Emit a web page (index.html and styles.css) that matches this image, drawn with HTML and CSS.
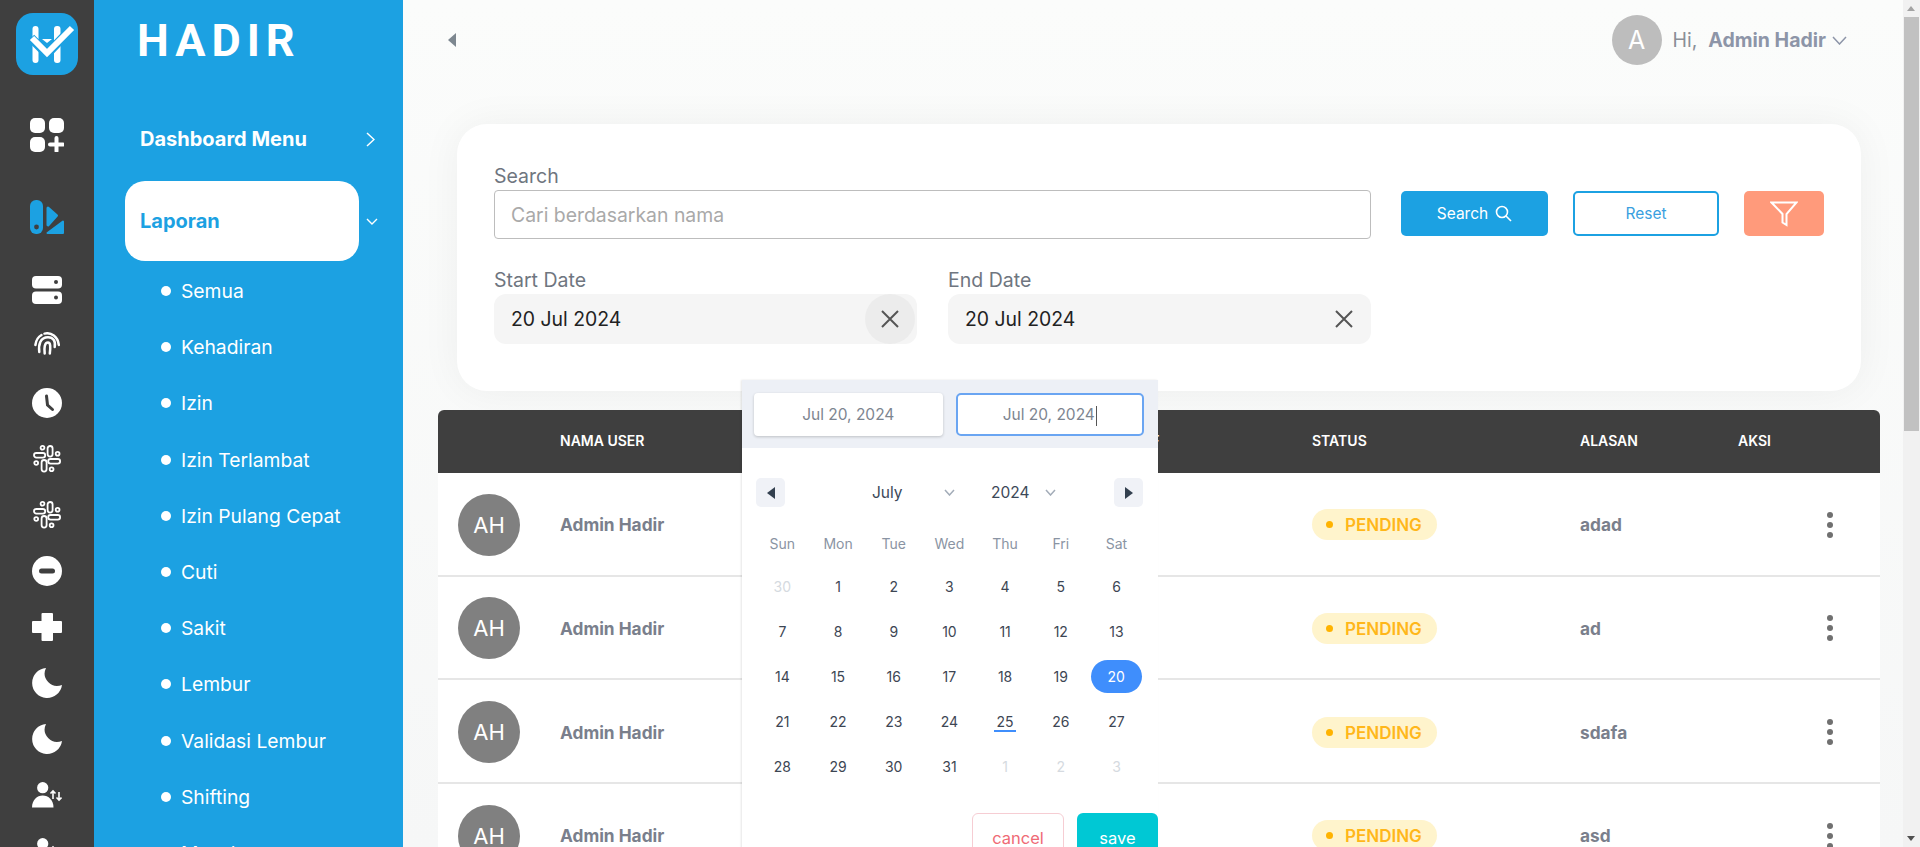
FILE: index.html
```html
<!DOCTYPE html>
<html lang="en">
<head>
    <meta charset="UTF-8">
    <meta name="viewport" content="width=device-width, initial-scale=1.0">
    <title>Hadir - Laporan</title>
    <link rel="stylesheet" href="styles.css">
</head>
<body>
    <nav class="rail">
        <div class="rail-logo">
            <svg width="62" height="62" viewBox="0 0 62 62">
                <rect x="16.5" y="13" width="6" height="37" rx="3" fill="#fff"/>
                <rect x="38" y="13" width="6.5" height="37" rx="3" fill="#fff"/>
                <path d="M15 25 L31 41 L56 15" fill="none" stroke="#1ca1e2" stroke-width="9"/>
                <path d="M16 25 L31 40 L56 15" fill="none" stroke="#fff" stroke-width="6"/>
                <path d="M26 26 H36 L31 30 Z" fill="#fff"/>
            </svg>
        </div>
        <div class="rail-item rail-grid">
            <svg width="34" height="34" viewBox="0 0 34 34" fill="#fff">
                <rect width="15" height="15" rx="5"/><rect x="19" width="15" height="15" rx="5"/><rect y="19" width="15" height="15" rx="5"/>
                <path d="M20 26.5 H33 M26.5 20 V33" stroke="#fff" stroke-width="4" stroke-linecap="round"/>
            </svg>
        </div>
        <div class="rail-item rail-report">
            <svg width="34" height="34" viewBox="0 0 34 34" fill="#1ca1e2">
                <rect width="13" height="34" rx="6"/><circle cx="6.5" cy="27" r="2.4" fill="#3f3f3f"/>
                <path d="M18 8 L26.5 15.5 L18 25 Z" stroke="#1ca1e2" stroke-width="3" stroke-linejoin="round"/>
                <path d="M17.5 33 L33 21.5 V33 Z" stroke="#1ca1e2" stroke-width="2" stroke-linejoin="round"/>
            </svg>
        </div>
        <div class="rail-item rail-server">
            <svg width="30" height="28" viewBox="0 0 30 28" fill="#fff">
                <rect width="30" height="12.5" rx="4"/><rect y="15.5" width="30" height="12.5" rx="4"/>
                <circle cx="24" cy="6" r="2" fill="#3f3f3f"/><circle cx="24" cy="21.5" r="2" fill="#3f3f3f"/>
            </svg>
        </div>
        <div class="rail-item rail-finger">
            <svg width="26" height="24" viewBox="0 0 26 24" fill="none" stroke="#fff" stroke-width="2.5" stroke-linecap="round">
                <path d="M1.4 13 C2 8 4 5 7.5 3"/>
                <path d="M10.5 1.6 C17 0 24 4.5 24.8 13"/>
                <path d="M5.3 20 C4.4 13 6 5.2 14 5.2 C19.5 5.2 21.8 9.5 20.7 15"/>
                <path d="M10.7 21.5 C10 16 10.5 10.5 14 10.5 C16.6 10.5 16.6 15 15.8 21.5"/>
            </svg>
        </div>
        <div class="rail-item rail-clock">
            <svg width="30" height="30" viewBox="0 0 30 30">
                <circle cx="15" cy="15" r="15" fill="#fff"/>
                <path d="M14.5 8 L15.5 17 L20.5 21.5" fill="none" stroke="#3f3f3f" stroke-width="3" stroke-linecap="round"/>
            </svg>
        </div>
        <div class="rail-item">
            <svg width="28" height="28" viewBox="0 0 28 28"><use href="#slack-icon"/></svg>
        </div>
        <div class="rail-item">
            <svg width="28" height="28" viewBox="0 0 28 28"><use href="#slack-icon"/></svg>
        </div>
        <div class="rail-item">
            <svg width="30" height="30" viewBox="0 0 30 30">
                <circle cx="15" cy="15" r="15" fill="#fff"/><rect x="7" y="12.5" width="16" height="5" rx="2.5" fill="#3f3f3f"/>
            </svg>
        </div>
        <div class="rail-item">
            <svg width="30" height="28" viewBox="0 0 30 28"><path d="M9.5 1 Q9.5 0 10.5 0 H20 Q21 0 21 1 V8 H29 Q30 8 30 9 V19 Q30 20 29 20 H21 V27 Q21 28 20 28 H10.5 Q9.5 28 9.5 27 V20 H1 Q0 20 0 19 V9 Q0 8 1 8 H9.5 Z" fill="#fff"/></svg>
        </div>
        <div class="rail-item">
            <svg width="30" height="30" viewBox="0 0 30 30"><path d="M14 0 A15 15 0 1 0 30 17 A12.5 12.5 0 0 1 14 0 Z" fill="#fff"/></svg>
        </div>
        <div class="rail-item">
            <svg width="30" height="30" viewBox="0 0 30 30"><path d="M14 0 A15 15 0 1 0 30 17 A12.5 12.5 0 0 1 14 0 Z" fill="#fff"/></svg>
        </div>
        <div class="rail-item">
            <svg width="30" height="26" viewBox="0 0 30 26"><use href="#user-icon"/></svg>
        </div>
        <div class="rail-item">
            <svg width="30" height="26" viewBox="0 0 30 26"><use href="#user-icon"/></svg>
        </div>
        <svg class="icon-defs" width="0" height="0">
            <symbol id="slack-icon" viewBox="0 0 28 28">
                <g fill="none" stroke="#fff" stroke-width="1.8">
                    <circle cx="9.5" cy="2.8" r="1.9"/><rect x="14.6" y="1" width="5" height="10.6" rx="2.5"/>
                    <circle cx="24.6" cy="8.8" r="1.9"/><rect x="15.2" y="14" width="11.9" height="4.6" rx="2.3"/>
                    <circle cx="18.6" cy="24.2" r="1.9"/><rect x="8.6" y="15" width="5" height="11.6" rx="2.5"/>
                    <circle cx="3.2" cy="18" r="1.9"/><rect x="1" y="8" width="11.2" height="4.6" rx="2.3"/>
                </g>
            </symbol>
            <symbol id="user-icon" viewBox="0 0 30 26">
                <circle cx="10.7" cy="5.7" r="5.6" fill="#fff"/>
                <path d="M0 25.5 C0 18 5 13.5 10.7 13.5 C16.5 13.5 21.5 18 21.5 25.5 Z" fill="#fff"/>
                <path d="M21 17 V9 M18.5 11.5 L21 9 L23.5 11.5 M27 10 V18 M24.5 15.5 L27 18 L29.5 15.5" fill="none" stroke="#fff" stroke-width="1.6"/>
            </symbol>
        </svg>
    </nav>

    <aside class="sidebar">
        <div class="brand">HADIR</div>
        <div class="menu-head">
            <span>Dashboard Menu</span>
            <svg width="9" height="15" viewBox="0 0 9 15" fill="none" stroke="#fff" stroke-width="1.5"><path d="M1 1 L8 7.5 L1 14"/></svg>
        </div>
        <div class="menu-open">
            <div class="menu-pill">Laporan</div>
            <svg width="12" height="7" viewBox="0 0 12 7" fill="none" stroke="#fff" stroke-width="1.4"><path d="M1 1 L6 6 L11 1"/></svg>
        </div>
        <ul class="submenu">
            <li>Semua</li>
            <li>Kehadiran</li>
            <li>Izin</li>
            <li>Izin Terlambat</li>
            <li>Izin Pulang Cepat</li>
            <li>Cuti</li>
            <li>Sakit</li>
            <li>Lembur</li>
            <li>Validasi Lembur</li>
            <li>Shifting</li>
            <li>Masuk</li>
        </ul>
    </aside>

    <main class="main">
        <header class="topbar">
            <svg class="collapse" width="8" height="14" viewBox="0 0 8 14"><path d="M8 0 V14 L0 7 Z" fill="#7d8790"/></svg>
            <div class="user">
                <div class="user-avatar">A</div>
                <span class="user-hi">Hi,</span>
                <span class="user-name">Admin Hadir</span>
                <svg width="15" height="9" viewBox="0 0 15 9" fill="none" stroke="#8d95a8" stroke-width="1.5"><path d="M1 1 L7.5 8 L14 1"/></svg>
            </div>
        </header>

        <section class="filter-card">
            <div class="search-row">
                <div class="field">
                    <label>Search</label>
                    <div class="text-input">Cari berdasarkan nama</div>
                </div>
                <div class="actions">
                    <button class="btn btn-search">Search
                        <svg width="17" height="17" viewBox="0 0 17 17" fill="none" stroke="#fff" stroke-width="1.6"><circle cx="7" cy="7" r="5.5"/><path d="M11 11 L16 16"/></svg>
                    </button>
                    <button class="btn btn-reset">Reset</button>
                    <button class="btn btn-filter">
                        <svg width="28" height="26" viewBox="0 0 28 26" fill="none" stroke="#fff" stroke-width="2"><path d="M1.5 1.5 H26.5 L16.5 13 V24 L12.5 21.5 V13 Z"/></svg>
                    </button>
                </div>
            </div>
            <div class="date-row">
                <div class="field">
                    <label>Start Date</label>
                    <div class="date-input">
                        20 Jul 2024
                        <span class="clear clear-hover">
                            <svg width="18" height="18" viewBox="0 0 18 18" stroke="#555" stroke-width="2"><path d="M1 1 L17 17 M17 1 L1 17"/></svg>
                        </span>
                    </div>
                </div>
                <div class="field">
                    <label>End Date</label>
                    <div class="date-input">
                        20 Jul 2024
                        <span class="clear">
                            <svg width="18" height="18" viewBox="0 0 18 18" stroke="#555" stroke-width="2"><path d="M1 1 L17 17 M17 1 L1 17"/></svg>
                        </span>
                    </div>
                </div>
            </div>
        </section>

        <section class="report-table">
            <div class="table-head">
                <div></div>
                <div>NAMA USER</div>
                <div>TARIF</div>
                <div>STATUS</div>
                <div>ALASAN</div>
                <div>AKSI</div>
            </div>
            <div class="table-row">
                <div class="row-avatar">AH</div>
                <div class="cell-strong">Admin Hadir</div>
                <div></div>
                <div><span class="badge">PENDING</span></div>
                <div class="cell-strong">adad</div>
                <div class="kebab"><i></i><i></i><i></i></div>
            </div>
            <div class="table-row">
                <div class="row-avatar">AH</div>
                <div class="cell-strong">Admin Hadir</div>
                <div></div>
                <div><span class="badge">PENDING</span></div>
                <div class="cell-strong">ad</div>
                <div class="kebab"><i></i><i></i><i></i></div>
            </div>
            <div class="table-row">
                <div class="row-avatar">AH</div>
                <div class="cell-strong">Admin Hadir</div>
                <div></div>
                <div><span class="badge">PENDING</span></div>
                <div class="cell-strong">sdafa</div>
                <div class="kebab"><i></i><i></i><i></i></div>
            </div>
            <div class="table-row">
                <div class="row-avatar">AH</div>
                <div class="cell-strong">Admin Hadir</div>
                <div></div>
                <div><span class="badge">PENDING</span></div>
                <div class="cell-strong">asd</div>
                <div class="kebab"><i></i><i></i><i></i></div>
            </div>
        </section>

        <div class="datepicker">
            <div class="dp-inputs">
                <div class="dp-input">Jul 20, 2024</div>
                <div class="dp-input dp-focus">Jul 20, 2024<span class="caret"></span></div>
            </div>
            <div class="dp-nav">
                <span class="dp-arrow"><svg width="8" height="12" viewBox="0 0 8 12"><path d="M8 0 V12 L0 6 Z" fill="#33404f"/></svg></span>
                <span class="dp-month">July</span>
                <svg class="dp-chev" width="11" height="7" viewBox="0 0 11 7" fill="none" stroke="#a3acb8" stroke-width="1.5"><path d="M1 1 L5.5 6 L10 1"/></svg>
                <span class="dp-year">2024</span>
                <svg class="dp-chev" width="11" height="7" viewBox="0 0 11 7" fill="none" stroke="#a3acb8" stroke-width="1.5"><path d="M1 1 L5.5 6 L10 1"/></svg>
                <span class="dp-arrow dp-next"><svg width="8" height="12" viewBox="0 0 8 12"><path d="M0 0 V12 L8 6 Z" fill="#33404f"/></svg></span>
            </div>
            <div class="dp-grid dp-week">
                <span>Sun</span><span>Mon</span><span>Tue</span><span>Wed</span><span>Thu</span><span>Fri</span><span>Sat</span>
            </div>
            <div class="dp-grid dp-days">
                <span class="off">30</span><span>1</span><span>2</span><span>3</span><span>4</span><span>5</span><span>6</span>
                <span>7</span><span>8</span><span>9</span><span>10</span><span>11</span><span>12</span><span>13</span>
                <span>14</span><span>15</span><span>16</span><span>17</span><span>18</span><span>19</span><span class="selected">20</span>
                <span>21</span><span>22</span><span>23</span><span>24</span><span class="today">25</span><span>26</span><span>27</span>
                <span>28</span><span>29</span><span>30</span><span>31</span><span class="off">1</span><span class="off">2</span><span class="off">3</span>
            </div>
            <div class="dp-footer">
                <button class="dp-cancel">cancel</button>
                <button class="dp-save">save</button>
            </div>
        </div>
    </main>

    <div class="scrollbar">
        <span class="scroll-up"></span>
        <div class="scroll-thumb"></div>
        <span class="scroll-down"></span>
    </div>
</body>
</html>
```

FILE: styles.css
```css
* {
    box-sizing: border-box;
}

html, body {
    margin: 0;
    height: 100%;
    overflow: hidden;
}

body {
    display: flex;
    font-family: Inter, "Open Sans", sans-serif;
    background-color: #f8f9f9;
    color: #333;
}

/* left icon rail */
.rail {
    width: 94px;
    flex: none;
    height: 100vh;
    overflow: hidden;
    background-color: #3f3f3f;
    padding-top: 13px;
    display: flex;
    flex-direction: column;
    align-items: center;
}

.rail-logo {
    width: 62px;
    height: 62px;
    flex: none;
    background-color: #1ca1e2;
    border-radius: 17px;
}

.rail-logo svg {
    display: block;
}

.rail-item {
    height: 56px;
    flex: none;
    display: flex;
    align-items: center;
    justify-content: center;
}

.rail-grid { margin-top: 32px; }
.rail-report { margin-top: 26px; }
.rail-server { margin-top: 17px; }
.rail-finger { margin-top: -2px; }
.rail-clock { margin-top: 3px; }

.icon-defs {
    position: absolute;
}

/* blue menu */
.sidebar {
    width: 309px;
    flex: none;
    height: 100vh;
    overflow: hidden;
    background-color: #1ca1e2;
    color: #fff;
}

.brand {
    font-family: Roboto, sans-serif;
    font-weight: 700;
    font-size: 45px;
    line-height: 54px;
    letter-spacing: 6px;
    padding: 14px 0 0 43px;
}

.menu-head {
    display: flex;
    align-items: center;
    justify-content: space-between;
    margin-top: 37px;
    height: 68px;
    padding: 0 28px 0 46px;
    font-size: 20px;
    font-weight: 700;
}

.menu-open {
    display: flex;
    align-items: center;
    gap: 7px;
    margin: 8px 0 0 31px;
}

.menu-pill {
    width: 234px;
    height: 80px;
    display: flex;
    align-items: center;
    padding-left: 15px;
    background-color: #fff;
    border-radius: 20px;
    color: #1ca1e2;
    font-size: 20px;
    font-weight: 700;
}

.submenu {
    list-style: none;
    margin: 2px 0 0;
    padding: 0 0 0 87px;
}

.submenu li {
    position: relative;
    height: 56.2px;
    line-height: 56px;
    font-size: 19.3px;
    white-space: nowrap;
}

.submenu li::before {
    content: "";
    position: absolute;
    left: -20px;
    top: 23px;
    width: 10px;
    height: 10px;
    border-radius: 50%;
    background-color: #fff;
}

/* main column */
.main {
    flex: 1;
    position: relative;
    height: 100vh;
    overflow: hidden;
    background: linear-gradient(#fbfcfb, #f6f7f7);
}

.topbar {
    height: 124px;
    display: flex;
    justify-content: space-between;
    padding: 15px 56px 0 45px;
}

.collapse {
    margin-top: 18px;
}

.user {
    display: flex;
    align-items: center;
    height: 50px;
    font-size: 19.5px;
}

.user-avatar {
    width: 50px;
    height: 50px;
    border-radius: 50%;
    background-color: #bdbdbd;
    color: #fff;
    font-size: 25px;
    display: flex;
    align-items: center;
    justify-content: center;
    margin-right: 11px;
}

.user-hi {
    color: #8a8f98;
    margin-right: 11px;
}

.user-name {
    color: #8d95a8;
    font-weight: 700;
    margin-right: 6px;
}

.filter-card {
    margin: 0 42px 0 54px;
    height: 267px;
    padding: 39px 37px 0;
    background-color: #fff;
    border-radius: 30px;
    box-shadow: 0 0 40px rgba(0, 0, 0, 0.05);
}

.search-row {
    display: flex;
}

.search-row .field {
    width: 877px;
    flex: none;
}

.field label {
    display: block;
    height: 24px;
    line-height: 26px;
    margin-bottom: 3px;
    font-size: 19.5px;
    color: #6f7680;
}

.text-input {
    height: 49px;
    line-height: 49px;
    padding-left: 16px;
    border: 1px solid #bdbdbd;
    border-radius: 4px;
    color: #a9a9a9;
    font-size: 19.4px;
}

.actions {
    display: flex;
    margin: 28px 0 0 30px;
    gap: 25px;
}

.btn {
    height: 45px;
    border: none;
    border-radius: 5px;
    font-family: inherit;
    font-size: 15.5px;
    display: flex;
    align-items: center;
    justify-content: center;
}

.btn-search {
    width: 147px;
    gap: 7px;
    background-color: #1ca1e2;
    color: #fff;
}

.btn-reset {
    width: 146px;
    background-color: #fff;
    border: 2px solid #1ca1e2;
    color: #3a9fe0;
}

.btn-filter {
    width: 80px;
    background-color: #ff9a7b;
}

.date-row {
    display: grid;
    grid-template-columns: 423px 423px;
    gap: 31px;
    margin-top: 28px;
}

.date-input {
    position: relative;
    height: 50px;
    line-height: 51px;
    padding-left: 17px;
    background-color: #f5f5f5;
    border-radius: 12px;
    color: #222;
    font-size: 19.4px;
}

.clear {
    position: absolute;
    right: 2px;
    top: 0;
    width: 50px;
    height: 50px;
    border-radius: 50%;
    display: flex;
    align-items: center;
    justify-content: center;
}

.clear-hover {
    background-color: #ececec;
}

/* report table */
.report-table {
    margin: 19px 23px 0 35px;
}

.table-head, .table-row {
    display: grid;
    grid-template-columns: 122px 560px 192px 268px 158px 142px;
    align-items: center;
}

.table-head {
    height: 63px;
    padding-bottom: 2px;
    background-color: #3f3f3f;
    border-radius: 6px 6px 0 0;
    color: #fff;
    font-size: 14px;
    font-weight: 600;
}

.table-row {
    height: 103.67px;
    padding-top: 2px;
    background-color: #fff;
    border-bottom: 2px solid #e6e6e6;
}

.row-avatar {
    width: 62px;
    height: 62px;
    margin-left: 20px;
    border-radius: 50%;
    background-color: #808080;
    color: #fff;
    font-size: 22px;
    display: flex;
    align-items: center;
    justify-content: center;
}

.cell-strong {
    color: #7a7f8c;
    font-size: 17.3px;
    font-weight: 700;
}

.badge {
    position: relative;
    display: inline-block;
    width: 125px;
    height: 31px;
    line-height: 32px;
    padding-left: 33px;
    background-color: #fff4cc;
    border-radius: 16px;
    color: #ffb71a;
    font-size: 17px;
    font-weight: 600;
    white-space: nowrap;
}

.badge::before {
    content: "";
    position: absolute;
    left: 14px;
    top: 12px;
    width: 7px;
    height: 7px;
    border-radius: 50%;
    background-color: #ffb300;
}

.kebab {
    display: flex;
    flex-direction: column;
    gap: 4px;
    padding-left: 89px;
}

.kebab i {
    width: 6px;
    height: 6px;
    border-radius: 50%;
    background-color: #707070;
}

/* date range popup */
.datepicker {
    position: absolute;
    left: 339px;
    top: 380px;
    width: 416px;
    height: 520px;
    background-color: #fff;
    box-shadow: -1px 0 2px rgba(0, 0, 0, 0.1);
}

.dp-inputs {
    height: 68px;
    padding: 13px 14px 0 12px;
    background-color: #edf0f6;
    display: flex;
    gap: 13px;
}

.dp-input {
    width: 189px;
    height: 43px;
    line-height: 43px;
    text-align: center;
    background-color: #fff;
    border-radius: 4px;
    box-shadow: 0 1px 3px rgba(0, 0, 0, 0.2);
    color: #7d8590;
    font-size: 15.5px;
}

.dp-focus {
    line-height: 39px;
    border: 2px solid #6aa5f2;
    box-shadow: none;
    border-radius: 5px;
}

.caret {
    display: inline-block;
    width: 1px;
    height: 20px;
    margin-left: 1px;
    vertical-align: middle;
    background-color: #555;
}

.dp-nav {
    position: relative;
    height: 29px;
    margin: 30px 15px 0 14px;
    color: #3c4858;
    font-size: 15.5px;
    line-height: 31px;
    display: flex;
    align-items: center;
}

.dp-arrow {
    width: 29px;
    height: 29px;
    border-radius: 5px;
    background-color: #f0f2f7;
    display: flex;
    align-items: center;
    justify-content: center;
}

.dp-next {
    margin-left: auto;
}

.dp-month {
    margin-left: 87px;
    width: 72px;
}

.dp-year {
    margin-left: 36px;
    width: 54px;
}

.dp-grid {
    display: grid;
    grid-template-columns: repeat(7, 55.7px);
    margin-left: 12.5px;
    text-align: center;
}

.dp-week {
    margin-top: 23px;
    height: 28px;
    line-height: 28px;
    font-size: 14px;
    color: #8a94a3;
}

.dp-days {
    margin-top: 6px;
    font-size: 14px;
    color: #3d4653;
}

.dp-days span {
    position: relative;
    height: 45px;
    line-height: 45px;
}

.dp-days .off {
    color: #d5dae0;
}

.dp-days .selected {
    width: 51px;
    height: 33px;
    line-height: 33px;
    margin: 6px 0 0 2px;
    border-radius: 17px;
    background-color: #3f8efc;
    color: #fff;
}

.dp-days .today::after {
    content: "";
    position: absolute;
    left: 17px;
    right: 17px;
    bottom: 12px;
    height: 2px;
    background-color: #3f8efc;
}

.dp-footer {
    display: flex;
    justify-content: flex-end;
    gap: 13px;
    margin-top: 24px;
}

.dp-footer button {
    height: 50px;
    border-radius: 6px;
    font-family: inherit;
    font-size: 16.5px;
}

.dp-cancel {
    width: 92px;
    background-color: #fff;
    border: 1.5px solid #f6cdd3;
    color: #ef6a75;
}

.dp-save {
    width: 81px;
    background-color: #00c8d4;
    border: none;
    color: #fff;
}

/* scrollbar */
.scrollbar {
    width: 17px;
    flex: none;
    height: 100vh;
    background-color: #f1f1f1;
    position: relative;
}

.scroll-thumb {
    position: absolute;
    top: 17px;
    left: 1px;
    width: 15px;
    height: 414px;
    background-color: #c1c1c1;
}

.scroll-up, .scroll-down {
    position: absolute;
    left: 4px;
    width: 0;
    height: 0;
    border-left: 4.5px solid transparent;
    border-right: 4.5px solid transparent;
}

.scroll-up {
    top: 6px;
    border-bottom: 5px solid #a3a3a3;
}

.scroll-down {
    bottom: 6px;
    border-top: 5px solid #505050;
}
```
